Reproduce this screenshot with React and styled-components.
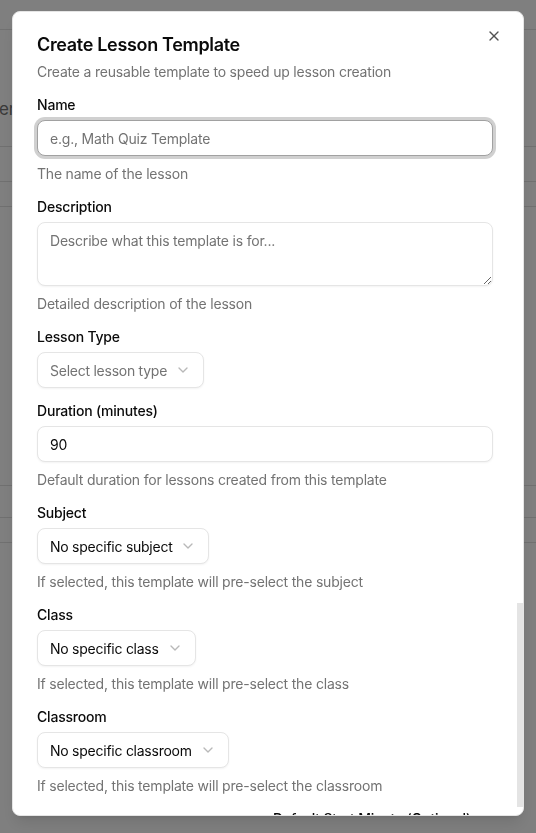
import React from 'react';
import styled, { createGlobalStyle } from 'styled-components';
import { X, ChevronDown } from 'lucide-react';

const Global = createGlobalStyle`
  html, body { margin: 0; padding: 0; }
  body {
    font-family: Inter, "Noto Sans", "Liberation Sans", sans-serif;
    color: #0a0a0a;
    background: #fff;
    letter-spacing: -0.0125em;
  }
  * { box-sizing: border-box; }
`;

/* ---------- background page ---------- */
const Page = styled.div`
  min-height: 100vh;
  background: #fff;
  display: flex;
  flex-direction: column;
`;
const TopBar = styled.div`
  height: 30px;
  border-bottom: 1px solid #e2e2e2;
`;
const Hero = styled.div`
  height: 117px;
  display: flex;
  align-items: flex-end;
  padding-bottom: 27px;
  border-bottom: 1px solid #e0e0e0;
`;
const HeroText = styled.span`
  font-size: 17px;
  color: #747474;
  margin-left: -1px;
`;
const BgRow = styled.div`
  height: ${(p) => p.$h}px;
  border-bottom: 1px solid #e0e0e0;
`;

const Overlay = styled.div`
  position: fixed;
  inset: 0;
  background: rgba(0, 0, 0, 0.5);
`;

/* ---------- dialog ---------- */
const Dialog = styled.div`
  position: fixed;
  top: 11px;
  left: 12px;
  width: 512px;
  bottom: 17px;
  background: #fff;
  border: 1px solid #e5e5e5;
  border-radius: 8px;
  box-shadow: 0 10px 15px -3px rgba(0, 0, 0, 0.1), 0 4px 6px -4px rgba(0, 0, 0, 0.1);
  overflow: hidden;
`;
const Body = styled.div`
  padding: 24px 30px 24px 24px;
  display: flex;
  flex-direction: column;
  gap: 16px;
`;
const Header = styled.div`
  display: flex;
  flex-direction: column;
  gap: 8px;
`;
const Title = styled.h2`
  margin: 0;
  font-size: 18px;
  line-height: 18px;
  font-weight: 600;
  letter-spacing: -0.018em;
  color: #0a0a0a;
`;
const Subtitle = styled.p`
  margin: 0;
  font-size: 14px;
  line-height: 20px;
  color: #737373;
`;
const CloseButton = styled.button`
  position: absolute;
  top: 16px;
  right: 21px;
  width: 16px;
  height: 16px;
  padding: 0;
  border: none;
  background: none;
  color: #0a0a0a;
  opacity: 0.7;
  display: flex;
  align-items: center;
  justify-content: center;
  cursor: pointer;
`;
const ScrollThumb = styled.div`
  position: absolute;
  right: 0;
  top: 591px;
  bottom: 8px;
  width: 6px;
  background: #e4e4e4;
`;

const Form = styled.div`
  display: flex;
  flex-direction: column;
  gap: 16px;
`;
const Field = styled.div`
  display: flex;
  flex-direction: column;
  gap: 8px;
  min-width: 0;
`;
const Label = styled.label`
  font-size: 14px;
  line-height: 14px;
  font-weight: 500;
  color: #0a0a0a;
  white-space: nowrap;
`;
const Help = styled.p`
  margin: 0;
  font-size: 14px;
  line-height: 20px;
  color: #737373;
`;
const Input = styled.input`
  height: 36px;
  width: 100%;
  padding: 4px 12px;
  font: inherit;
  font-size: 14px;
  letter-spacing: inherit;
  color: #0a0a0a;
  background: #fff;
  border: 1px solid ${(p) => (p.$focused ? '#a1a1a1' : '#e5e5e5')};
  border-radius: 8px;
  outline: none;
  box-shadow: ${(p) =>
    p.$focused ? '0 0 0 3px rgba(161,161,161,0.5)' : '0 1px 2px 0 rgba(0,0,0,0.05)'};
  &::placeholder { color: #737373; }
`;
const TextArea = styled.textarea`
  min-height: 64px;
  height: 64px;
  width: 100%;
  padding: 8px 12px;
  font: inherit;
  font-size: 14px;
  line-height: 20px;
  letter-spacing: inherit;
  color: #0a0a0a;
  background: #fff;
  border: 1px solid #e5e5e5;
  border-radius: 8px;
  outline: none;
  box-shadow: 0 1px 2px 0 rgba(0, 0, 0, 0.05);
  resize: vertical;
  display: block;
  &::placeholder { color: #737373; }
`;
const SelectTrigger = styled.button`
  align-self: flex-start;
  height: 36px;
  display: inline-flex;
  align-items: center;
  gap: 8px;
  padding: 0 12px;
  font: inherit;
  font-size: 14px;
  letter-spacing: -0.018em;
  color: ${(p) => (p.$placeholder ? '#737373' : '#0a0a0a')};
  background: #fff;
  border: 1px solid #e5e5e5;
  border-radius: 8px;
  box-shadow: 0 1px 2px 0 rgba(0, 0, 0, 0.05);
  white-space: nowrap;
  cursor: pointer;
  svg { opacity: 0.5; color: #737373; flex-shrink: 0; }
`;
const TwoCols = styled.div`
  display: grid;
  grid-template-columns: 1fr 1fr;
  gap: 16px;
`;

const Select = ({ value, placeholder }) => (
  <SelectTrigger type="button" $placeholder={!value}>
    <span>{value || placeholder}</span>
    <ChevronDown size={16} strokeWidth={2} />
  </SelectTrigger>
);

const selects = [
  { label: 'Subject', value: 'No specific subject', help: 'If selected, this template will pre-select the subject' },
  { label: 'Class', value: 'No specific class', help: 'If selected, this template will pre-select the class' },
  { label: 'Classroom', value: 'No specific classroom', help: 'If selected, this template will pre-select the classroom' },
];

export default function App() {
  return (
    <>
      <Global />
      <Page>
        <TopBar />
        <Hero>
          <HeroText>em</HeroText>
        </Hero>
        <BgRow $h={35} />
        <BgRow $h={25} />
        <BgRow $h={279} />
        <BgRow $h={32} />
        <BgRow $h={25} />
      </Page>
      <Overlay />
      <Dialog role="dialog">
        <Body>
          <Header>
            <Title>Create Lesson Template</Title>
            <Subtitle>Create a reusable template to speed up lesson creation</Subtitle>
          </Header>
          <Form>
            <Field>
              <Label>Name</Label>
              <Input $focused autoFocus placeholder="e.g., Math Quiz Template" />
              <Help>The name of the lesson</Help>
            </Field>
            <Field>
              <Label>Description</Label>
              <TextArea placeholder="Describe what this template is for..." />
              <Help>Detailed description of the lesson</Help>
            </Field>
            <Field>
              <Label>Lesson Type</Label>
              <Select placeholder="Select lesson type" />
            </Field>
            <Field>
              <Label>Duration (minutes)</Label>
              <Input defaultValue="90" />
              <Help>Default duration for lessons created from this template</Help>
            </Field>
            {selects.map((s) => (
              <Field key={s.label}>
                <Label>{s.label}</Label>
                <Select value={s.value} />
                <Help>{s.help}</Help>
              </Field>
            ))}
            <TwoCols>
              <Field />
              <Field>
                <Label>Default Start Minute (Optional)</Label>
                <Select value="No default" />
              </Field>
            </TwoCols>
          </Form>
        </Body>
        <CloseButton type="button" aria-label="Close">
          <X size={16} strokeWidth={2} />
        </CloseButton>
        <ScrollThumb />
      </Dialog>
    </>
  );
}
